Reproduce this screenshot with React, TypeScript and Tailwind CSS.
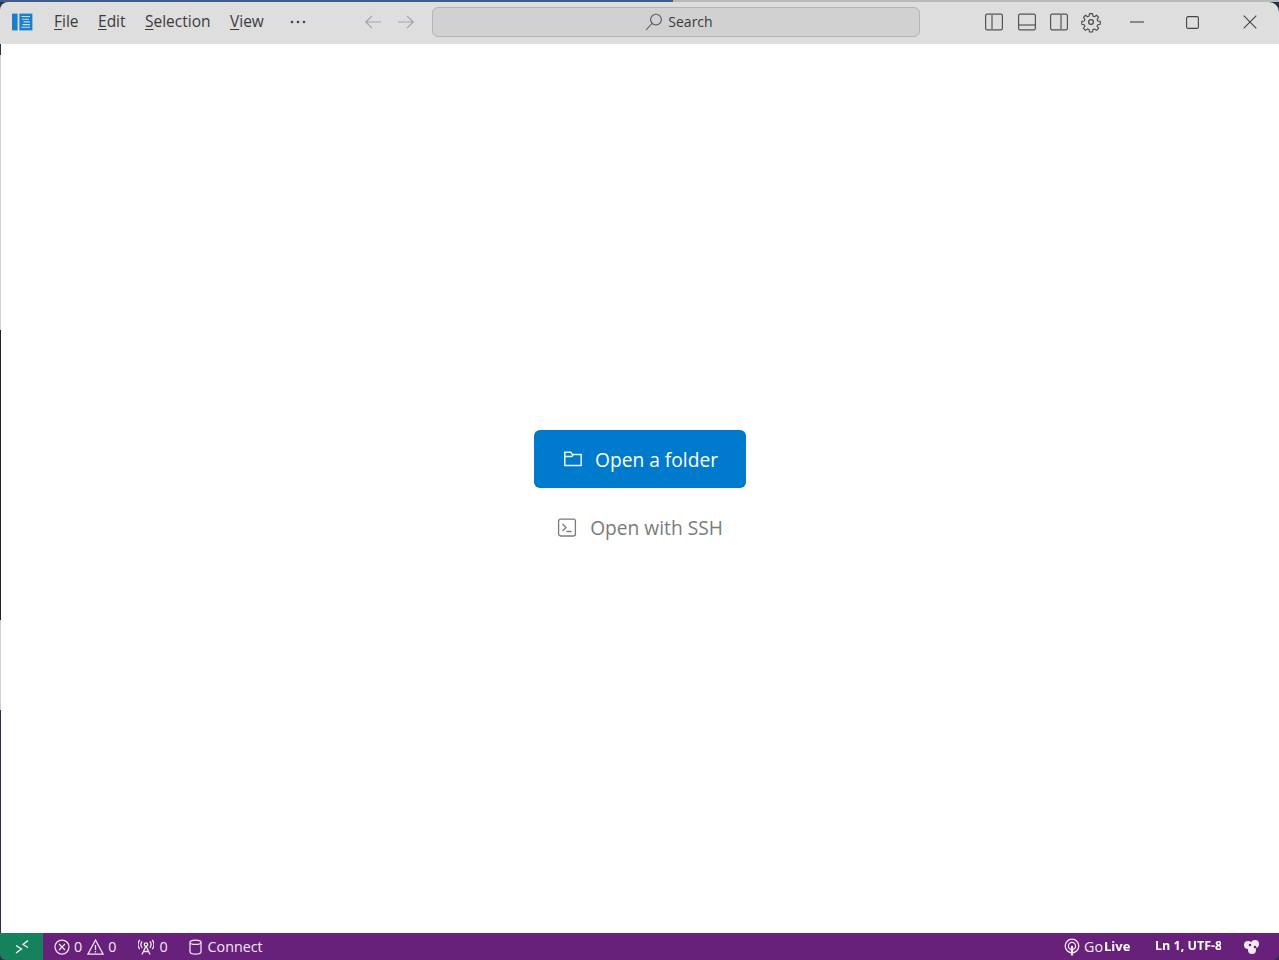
import React from "react";

function Logo() {
  return (
    <svg width="21" height="18" viewBox="0 0 21 18" className="shrink-0">
      <rect x="0" y="0.6" width="5.6" height="16.8" fill="#1a7fc8" />
      <rect x="7.4" y="0.6" width="13" height="16.8" fill="#1a7fc8" />
      <path d="M9.5 3.5h8.5M10 6.2h7M11.5 8.9h6.5M10.5 11.6h7.5M9.5 14.3h8.5" stroke="#bfe0f5" strokeWidth="1.1" fill="none" />
    </svg>
  );
}

function Menu({ u, rest, className }: { u: string; rest: string; className: string }) {
  return (
    <span className={className}>
      <span className="underline underline-offset-2 decoration-1">{u}</span>
      {rest}
    </span>
  );
}

function LayoutIcon({ kind }: { kind: "left" | "bottom" | "right" }) {
  const d = kind === "left" ? "M7 2v14" : kind === "bottom" ? "M1 12h16" : "M11 2v14";
  return (
    <svg width="18" height="18" viewBox="0 0 18 18" fill="none" stroke="#555" strokeWidth="1.2">
      <rect x="0.6" y="1.1" width="16.8" height="15.8" rx="1.6" />
      <path d={d} />
    </svg>
  );
}

function Gear() {
  return (
    <svg width="22" height="22" viewBox="0 0 24 24" fill="none" stroke="#4a4a4a" strokeWidth="1.35" strokeLinejoin="round">
      <path d="M10.2 1.8h3.6l.5 3 1.9.8 2.5-1.8 2.5 2.5-1.8 2.5.8 1.9 3 .5v3.6l-3 .5-.8 1.9 1.8 2.5-2.5 2.5-2.5-1.8-1.9.8-.5 3h-3.6l-.5-3-1.9-.8-2.5 1.8-2.5-2.5 1.8-2.5-.8-1.9-3-.5v-3.6l3-.5.8-1.9-1.8-2.5 2.5-2.5 2.5 1.8 1.9-.8z" transform="translate(1.2 1.2) scale(0.9)" />
      <circle cx="12" cy="12" r="2.6" />
    </svg>
  );
}

export default function App() {
  return (
    <div className="relative flex h-[960px] w-[1279px] flex-col overflow-hidden bg-[linear-gradient(to_bottom,#27304a_0,#27304a_55px,#cfcfcf_55px,#cfcfcf_330px,#222_330px,#222_620px,#cfcfcf_620px,#cfcfcf_710px,#27304a_710px)] font-['Open_Sans','Noto_Sans',sans-serif]">
      <div className="flex h-[2px] shrink-0">
        <div className="w-[673px] bg-[#3f5c8c]" />
        <div className="flex-1 bg-[#b9b9b9]" />
      </div>
      <header className="flex h-[42px] shrink-0 items-center rounded-tl-[8px] rounded-tr-[10px] bg-[#dedede] pb-[2px] pl-[12px] text-[#3b3b3b]">
        <Logo />
        <div className="ml-[21px] flex items-center text-[15.5px]">
          <Menu u="F" rest="ile" className="w-[44px]" />
          <Menu u="E" rest="dit" className="w-[47px]" />
          <Menu u="S" rest="election" className="w-[85px]" />
          <Menu u="V" rest="iew" className="w-[60px]" />
          <svg width="16" height="4" viewBox="0 0 16 4" fill="#444" className="-mt-[1px]">
            <circle cx="2" cy="2" r="1.3" />
            <circle cx="8" cy="2" r="1.3" />
            <circle cx="14" cy="2" r="1.3" />
          </svg>
        </div>
        <div className="ml-[58px] flex items-center gap-[15px] text-[#a3a3a3]">
          <svg width="18" height="16" viewBox="0 0 18 16" fill="none" stroke="currentColor" strokeWidth="1.2">
            <path d="M17 8H2M8 1.8 1.8 8 8 14.2" />
          </svg>
          <svg width="18" height="16" viewBox="0 0 18 16" fill="none" stroke="currentColor" strokeWidth="1.2">
            <path d="M1 8h15M10 1.8 16.2 8 10 14.2" />
          </svg>
        </div>
        <div className="ml-[17px] flex h-[30px] w-[488px] items-center justify-center gap-[5px] rounded-[6px] border border-[#b4b4b4] bg-[#d1d1d1] pl-[6px] text-[14px] text-[#3b3b3b]">
          <svg width="18" height="18" viewBox="0 0 18 18" fill="none" stroke="#555" strokeWidth="1.1">
            <circle cx="11" cy="6.6" r="5.4" />
            <path d="M7 10.5 1 17" />
          </svg>
          <span className="-mt-[2px]">Search</span>
        </div>
        <div className="ml-[65px] flex items-center gap-[14.5px]">
          <LayoutIcon kind="left" />
          <LayoutIcon kind="bottom" />
          <LayoutIcon kind="right" />
        </div>
        <div className="ml-[12px]"><Gear /></div>
        <div className="ml-[28px] flex items-center">
          <svg width="14" height="14" viewBox="0 0 14 14" stroke="#444" strokeWidth="1.1"><path d="M0 7h14" /></svg>
          <svg width="13" height="13" viewBox="0 0 13 13" fill="none" stroke="#444" strokeWidth="1.1" className="ml-[42px]"><rect x="0.6" y="0.6" width="11.8" height="11.8" rx="1.5" /></svg>
          <svg width="14" height="14" viewBox="0 0 14 14" stroke="#444" strokeWidth="1.1" className="ml-[44px]"><path d="M.7.7l12.6 12.6M13.3.7.7 13.3" /></svg>
        </div>
      </header>

      <main className="ml-[1px] flex flex-1 flex-col items-center bg-white pt-[386px]">
        <div className="flex h-[58px] w-[212px] items-center justify-center gap-[13px] rounded-[6px] bg-[#007acc] pl-[2px] text-[19.2px] text-white">
          <svg width="18" height="16" viewBox="0 0 18 16" fill="none" stroke="#e6f4fc" strokeWidth="1.5">
            <path d="M.8 14.4V1.2h6l1.6 2.4h8.8v10.8zM.8 5.6h7l1.4-2" />
          </svg>
          <span className="mt-[2px]">Open a folder</span>
        </div>
        <div className="mt-[25px] flex items-center gap-[13px] text-[19.2px] leading-[30px] text-[#7b7b7b]">
          <svg width="20" height="20" viewBox="0 0 20 20" fill="none" stroke="#7b7b7b" strokeWidth="1.3">
            <rect x="1.6" y="1.2" width="16.8" height="16.8" rx="2" />
            <path d="M5.5 6 9 9.5 5.5 13M9.5 13.5h5" />
          </svg>
          <span>Open with SSH</span>
        </div>
      </main>

      <footer className="flex h-[27px] shrink-0 items-center rounded-b-[6px] bg-[#68217a] text-[14.3px] text-[#f2e8f5]">
        <div className="flex h-full w-[43px] items-center justify-center rounded-bl-[6px] bg-[#16825d]">
          <svg width="16" height="16" viewBox="0 0 16 16" fill="none" stroke="#fff" strokeWidth="1.2">
            <path d="M2 6.5 7.5 10 2 14M14 1.5 9 5.5l5 3" />
          </svg>
        </div>
        <div className="ml-[11px] flex items-center gap-[4px]">
          <svg width="16" height="16" viewBox="0 0 16 16" fill="none" stroke="currentColor" strokeWidth="1.25">
            <circle cx="8" cy="8" r="7" />
            <path d="M5 5l6 6M11 5l-6 6" />
          </svg>
          <span>0</span>
          <svg width="17" height="16" viewBox="0 0 17 16" fill="none" stroke="currentColor" strokeWidth="1.25" className="ml-[1px]">
            <path d="M8.5 1 16 15H1zM8.5 6v5M8.5 12v1.4" />
          </svg>
          <span>0</span>
        </div>
        <div className="ml-[22px] flex items-center gap-[5px]">
          <svg width="16" height="16" viewBox="0 0 16 16" fill="none" stroke="currentColor" strokeWidth="1.3">
            <circle cx="8" cy="5.5" r="1.7" />
            <path d="M8 7 4 15.5M8 7l4 8.5M5.3 12.5h5.4M4.2 2.4a5 5 0 0 0 0 6.4M11.8 2.4a5 5 0 0 1 0 6.4M1.8 .8a7.5 7.5 0 0 0 0 9.4M14.2 .8a7.5 7.5 0 0 1 0 9.4" />
          </svg>
          <span>0</span>
        </div>
        <div className="ml-[21px] flex items-center gap-[6px]">
          <svg width="13" height="16" viewBox="0 0 13 16" fill="none" stroke="currentColor" strokeWidth="1.25">
            <path d="M1 3.4v9.4c0 1.3 2.4 2.4 5.5 2.4s5.5-1.1 5.5-2.4V3.4" />
            <ellipse cx="6.5" cy="3.2" rx="5.5" ry="2.2" />
          </svg>
          <span>Connect</span>
        </div>
        <div className="ml-auto mr-[18px] flex items-center">
          <svg width="16" height="18" viewBox="0 0 16 18" fill="none" stroke="currentColor" strokeWidth="1.3">
            <circle cx="8" cy="8" r="6.8" />
            <circle cx="8" cy="8" r="3.6" />
            <path d="M8 8v9.5" strokeWidth="2.2" />
          </svg>
          <span className="ml-[4px] w-[20px]">Go</span>
          <span className="w-[29px] overflow-hidden text-[13px] font-bold whitespace-nowrap text-white blur-[0.6px]">Live</span>
          <span className="ml-[22px] w-[66px] overflow-hidden text-[12.5px] font-bold whitespace-nowrap text-white blur-[0.6px]">Ln 1, UTF-8</span>
          <svg width="18" height="16" viewBox="0 0 18 16" fill="#f5e9f7" className="ml-[22px] blur-[0.3px]">
            <circle cx="5" cy="6" r="4" />
            <circle cx="12" cy="5" r="4" />
            <circle cx="9" cy="11" r="4" />
            <circle cx="7" cy="6" r="1.3" fill="#68217a" />
            <circle cx="12" cy="8" r="1.3" fill="#68217a" />
          </svg>
        </div>
      </footer>
    </div>
  );
}
